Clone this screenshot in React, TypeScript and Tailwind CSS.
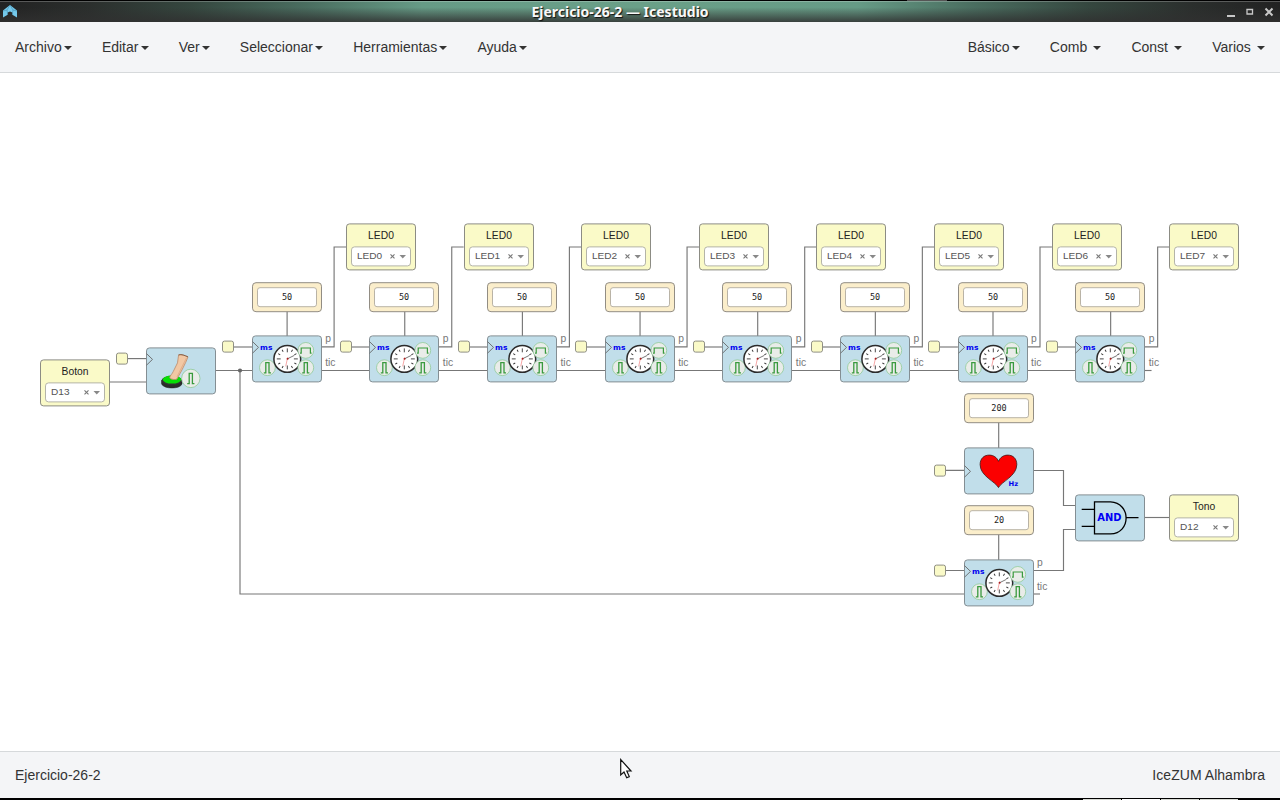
import React from "react";

const OFFSET_Y = 73;
const PITCH = 117.65;

type Point = { x: number; y: number };

function at(p: Point) {
  return { left: Math.round(p.x), top: p.y - OFFSET_Y };
}

function MenuItem({ label, spaced = false }: { label: string; spaced?: boolean }) {
  return (
    <button className="flex items-center whitespace-nowrap px-[15px]">
      <span>{label}</span>
      <span
        className={
          spaced
            ? "ml-[6.2px] mt-[2px] border-x-4 border-t-4 border-x-transparent border-t-[#333]"
            : "ml-[2.2px] mt-[2px] border-x-4 border-t-4 border-x-transparent border-t-[#333]"
        }
      />
    </button>
  );
}

function PinNode({ x, y, label, pin }: Point & { label: string; pin: string }) {
  return (
    <div
      className="absolute flex h-[47px] w-[70px] translate-y-[0.4px] flex-col items-center rounded-[3.5px] border border-[#8c8c84] bg-[#fafac8] pt-[5px]"
      style={at({ x, y })}
    >
      <div className="text-[10.3px] leading-[14px] text-[#222]">{label}</div>
      <div className="mt-[3px] flex h-[20px] w-[60px] shrink-0 items-center rounded-[3.5px] border border-[#b4b4a8] bg-white pl-[4.8px] pr-[4px]">
        <span className="flex-1 origin-left scale-x-[1.12] text-[9px] leading-none text-[#555]">{pin}</span>
        <svg width="17" height="8" viewBox="0 0 17 8" className="shrink-0">
          <path d="M1.5 2 L5.5 6 M5.5 2 L1.5 6" stroke="#777" strokeWidth="1.1" />
          <path d="M10.5 2.5 H17 L13.75 6 Z" fill="#888" />
        </svg>
      </div>
    </div>
  );
}

function ConstantNode({ x, y, value }: Point & { value: string }) {
  return (
    <div
      className="absolute flex h-[30px] w-[70px] translate-y-[0.2px] items-center justify-center rounded-[4px] border border-[#928d84] bg-[#fbeecb]"
      style={at({ x, y })}
    >
      <div className="flex h-[20px] w-[60px] items-center justify-center rounded-[3px] border border-[#b9b3a6] bg-white font-['DejaVu_Sans_Mono',monospace] text-[8.5px] leading-none text-[#222]">
        {value}
      </div>
    </div>
  );
}

function ClockStub({ x, y }: Point) {
  return (
    <div
      className="absolute h-[12px] w-[12px] translate-y-[0.6px] rounded-[2.5px] border border-[#8f8f84] bg-[#fafac8]"
      style={at({ x, y })}
    />
  );
}

function Block({
  x,
  y,
  clockY,
  children,
}: Point & { clockY?: number; children: React.ReactNode }) {
  return (
    <div
      className="absolute h-[47px] w-[70px] translate-y-[0.4px] rounded-[3.5px] border border-[#848e93] bg-[#c1deea]"
      style={at({ x, y })}
    >
      <svg width="68" height="45" viewBox="1 1 68 45" className="block overflow-visible">
        {clockY !== undefined && (
          <path
            d="M0.5 -5.8 L6.5 0 L0.5 5.8"
            transform={`translate(0 ${clockY})`}
            fill="none"
            stroke="#666"
            strokeWidth="0.9"
          />
        )}
        {children}
      </svg>
    </div>
  );
}

function Badge({ cx, cy, wide = false, r = 7.9 }: { cx: number; cy: number; wide?: boolean; r?: number }) {
  return (
    <g transform={`translate(${cx} ${cy})`}>
      <circle r={r} fill="#e9ece9" stroke="#8fca98" strokeWidth="0.8" />
      {wide ? (
        <path d="M-5.8 2.7 H-4.6 V-2.4 H4.6 V2.7 H5.8" fill="none" stroke="#399a3d" strokeWidth="1.2" />
      ) : (
        <path d="M-3.6 5.2 H-1.6 V-5 H1.6 V5.2 H3.6" fill="none" stroke="#399a3d" strokeWidth="1.3" />
      )}
    </g>
  );
}

const TICKS = [0, 30, 60, 90, 120, 150, 180, 210, 240, 270, 300, 330];

function TimerBlock({ x, y }: Point) {
  return (
    <Block x={x} y={y} clockY={12}>
      <text
        x="8"
        y="14.6"
        fontSize="7.2"
        fontWeight="700"
        fill="#0000f0"
        fontFamily="DejaVu Sans"
        textLength="12.4"
        lengthAdjust="spacingAndGlyphs"
      >
        ms
      </text>
      <Badge cx={15.4} cy={32.3} />
      <circle cx="35.3" cy="23.5" r="13.4" fill="#fff" stroke="#2b2b2b" strokeWidth="1.5" />
      {TICKS.map((a) => (
        <path
          key={a}
          d={a % 90 === 0 ? "M35.3 13 V16.9" : "M35.3 13 V15.3"}
          stroke="#333"
          strokeWidth="0.9"
          transform={`rotate(${a} 35.3 23.5)`}
        />
      ))}
      <path d="M35.3 23.5 L42.3 20" stroke="#555" strokeWidth="0.8" />
      <path d="M35.6 22.2 L33.7 31" stroke="#f08080" strokeWidth="0.7" />
      <circle cx="35.6" cy="23.4" r="1" fill="#a22" />
      <Badge cx={53.8} cy={15} wide />
      <Badge cx={53.8} cy={32.3} />
    </Block>
  );
}

function ButtonBlock({ x, y }: Point) {
  return (
    <Block x={x} y={y} clockY={12}>
      <path d="M15.5 33 V36.3 C17 42 35 42 36 36.3 V33 Z" fill="#292d2a" stroke="#222" strokeWidth="0.5" />
      <ellipse cx="25.8" cy="33" rx="10.2" ry="4.6" fill="#333" />
      <ellipse cx="26" cy="32.2" rx="9.2" ry="4" fill="#06df06" />
      <path
        d="M32.6 7.5 C35.6 6.6 38.6 8 42 9.5 L39.7 15 L36 22.5 L31 31.5 C29.5 32.8 25 32 23.7 30.5 C23.6 28.5 26.3 26.5 27.3 24 L31.5 15.5 Z"
        fill="#f2c8a4"
        stroke="#bb8a69"
        strokeWidth="0.8"
      />
      <path d="M40.5 10.5 L31 29.5" fill="none" stroke="#d8a17d" strokeWidth="0.7" />
      <path d="M32.6 7.5 C35.6 6.6 38.6 8 42 9.5" fill="none" stroke="#744f38" strokeWidth="0.8" />
      <Badge cx={44.8} cy={31} r={9.2} />
    </Block>
  );
}

function HeartBlock({ x, y }: Point) {
  return (
    <Block x={x} y={y} clockY={24}>
      <path
        d="M34.5 40.2 C31.5 34.2 16.1 28.7 16.1 17.2 C16.1 11 20.2 7.7 25.2 7.7 C29.6 7.7 32.8 10 34.5 13.9 C36.2 10 39.4 7.7 43.8 7.7 C48.8 7.7 52.8 11 52.8 17.2 C52.8 28.7 37.5 34.2 34.5 40.2 Z"
        fill="#fb0000"
        stroke="#3c1c1c"
        strokeWidth="0.8"
      />
      <text
        x="44.6"
        y="38.8"
        fontSize="6.5"
        fontWeight="700"
        fill="#0000f0"
        fontFamily="DejaVu Sans"
        textLength="9.6"
        lengthAdjust="spacingAndGlyphs"
      >
        Hz
      </text>
    </Block>
  );
}

function AndBlock({ x, y }: Point) {
  return (
    <Block x={x} y={y}>
      <g fill="none" stroke="#000" strokeWidth="1.3">
        <path d="M19.5 7.5 H35.5 C56.3 8.5 56.3 39 35.5 39.5 H19.5 Z" />
        <path d="M6.7 15 H19.5 M6.7 32 H19.5 M51 23.3 H63.5" />
      </g>
      <text
        x="22.3"
        y="26.8"
        fontSize="10.6"
        fontWeight="700"
        fill="#0000f5"
        fontFamily="DejaVu Sans"
        textLength="24.2"
        lengthAdjust="spacingAndGlyphs"
      >
        AND
      </text>
    </Block>
  );
}

function PortLabel({ x, y, text }: Point & { text: string }) {
  return (
    <span
      className="absolute text-[10.3px] leading-[12px] text-[#777]"
      style={{ left: x, top: y - OFFSET_Y }}
    >
      {text}
    </span>
  );
}

const stages = Array.from({ length: 8 }, (_, i) => ({ dx: i * PITCH, pin: `LED${i}` }));

function Wires() {
  return (
    <svg className="absolute left-0 top-0" width="1280" height="678" viewBox="0 73 1280 678">
      <g fill="none" stroke="#777" strokeWidth="1.15">
        {stages.map(({ dx, pin }, i) => (
          <g key={pin} transform={`translate(${dx} 0)`}>
            <path d="M234 347 H252" />
            <path d="M287.1 311 V336" />
            <path d="M321 346.8 H334.1 V247 H346" />
            <path d={i === 7 ? "M321 370.5 H328" : "M321 370.5 H370"} />
          </g>
        ))}
        <path d="M109 382 H146" />
        <path d="M128 358.6 H146" />
        <path d="M215 370.5 H252" />
        <path d="M240 370.5 V594 H964" />
        <path d="M945 470.4 H964 M945 570.5 H964" />
        <path d="M998.7 422 V448 M998.7 534 V560" />
        <path d="M1033 470.5 H1063.5 V505.5 H1075" />
        <path d="M1033 570.5 H1063.5 V529.5 H1075" />
        <path d="M1033 594 H1040" />
        <path d="M1144 517.5 H1169" />
      </g>
      <circle cx="240" cy="370.5" r="2.1" fill="#666" />
    </svg>
  );
}

function Diagram() {
  return (
    <main className="relative min-h-0 flex-1 overflow-hidden bg-white">
      <Wires />
      {stages.map(({ dx, pin }) => (
        <React.Fragment key={pin}>
          <PinNode x={345.85 + dx} y={223} label="LED0" pin={pin} />
          <ConstantNode x={251.7 + dx} y={282} value="50" />
          <ClockStub x={222.35 + dx} y={340} />
          <TimerBlock x={251.7 + dx} y={335} />
          <PortLabel x={325.2 + dx} y={332.5} text="p" />
          <PortLabel x={325.2 + dx} y={356.5} text="tic" />
        </React.Fragment>
      ))}
      <PinNode x={40} y={359} label="Boton" pin="D13" />
      <ClockStub x={116} y={352} />
      <ButtonBlock x={146} y={347} />
      <ConstantNode x={964} y={393} value="200" />
      <ClockStub x={934} y={464} />
      <HeartBlock x={964} y={447} />
      <ConstantNode x={964} y={505} value="20" />
      <ClockStub x={934} y={564} />
      <TimerBlock x={964} y={559} />
      <PortLabel x={1037} y={556.5} text="p" />
      <PortLabel x={1037} y={580.5} text="tic" />
      <AndBlock x={1075} y={494} />
      <PinNode x={1169} y={494} label="Tono" pin="D12" />
    </main>
  );
}

function TitleBar() {
  return (
    <header className="relative flex h-[22px] shrink-0 items-center border-t border-black bg-[linear-gradient(to_bottom,rgba(255,255,255,.35)_0px,rgba(255,255,255,0)_1.5px,transparent_30%,rgba(48,48,48,.25)_50%,rgba(48,48,48,.85)_100%),linear-gradient(to_right,#222_0%,#2b2f2d_7%,#35473f_15%,#4a6e60_24%,#669b86_33%,#6aa088_50%,#669b86_67%,#4a6e60_76%,#35473f_85%,#2b2f2d_93%,#222_100%)] px-[2px]">
      <div className="absolute -top-px left-[907px] h-px w-[40px] bg-[#555]" />
      <svg width="16" height="16" viewBox="0 0 16 16">
        <path d="M1 13.5 V6.5 L8 1 L15 6.5 V13.5 L10.3 10.8 V8.6 L8 7.6 L5.7 8.6 V10.8 Z" fill="#74c8ea" />
        <path
          d="M1 7 L5 6 L8 1 L11 6 L15 7 M5 6 L5.7 10.5 M11 6 L10.3 10.5"
          fill="none"
          stroke="#3c84a6"
          strokeWidth="0.5"
        />
      </svg>
      <h1 className="flex-1 whitespace-nowrap pr-[2px] text-center font-['Noto_Sans',sans-serif] text-[14px] font-bold leading-none text-[#f8f8f8] [text-shadow:1px_1px_1px_#111]">
        <span className="relative -left-px">Ejercicio-26-2 — Icestudio</span>
      </h1>
      <svg width="52" height="14" viewBox="0 0 52 14">
        <path d="M1 11 H9" stroke="#c8c8c8" strokeWidth="2" />
        <path d="M21 4.5 H26.5 V9 H21 Z M20.3 4.3 H27.2" fill="none" stroke="#c8c8c8" strokeWidth="1.3" />
        <path d="M39.5 3.5 L46.5 10.5 M46.5 3.5 L39.5 10.5" stroke="#c8c8c8" strokeWidth="2" />
      </svg>
    </header>
  );
}

export default function App() {
  return (
    <div className="relative flex h-[800px] w-[1280px] flex-col overflow-hidden bg-white font-['Liberation_Sans',Arial,sans-serif] text-[14px] text-[#333]">
      <TitleBar />
      <nav className="flex h-[51px] shrink-0 items-stretch justify-between border-b border-[#d6d9db] bg-[#f4f5f7]">
        <div className="flex">
          <MenuItem label="Archivo" />
          <MenuItem label="Editar" />
          <MenuItem label="Ver" />
          <MenuItem label="Seleccionar" />
          <MenuItem label="Herramientas" />
          <MenuItem label="Ayuda" />
        </div>
        <div className="flex">
          <MenuItem label="Básico" />
          <MenuItem label="Comb" spaced />
          <MenuItem label="Const" spaced />
          <MenuItem label="Varios" spaced />
        </div>
      </nav>
      <Diagram />
      <footer className="flex h-[47px] shrink-0 items-center justify-between border-t border-[#d6d9db] bg-[#f4f5f7] px-[15px]">
        <span>Ejercicio-26-2</span>
        <span className="tracking-[0.04px]">IceZUM Alhambra</span>
      </footer>
      <div className="flex h-[2px] shrink-0 items-end justify-end gap-[1px] bg-black pr-[42px]">
        <span className="h-[1px] w-[38px] bg-[#d8dad4]" />
        <span className="h-[1px] w-[38px] bg-white" />
        <span className="h-[1px] w-[38px] bg-[#d8dad4]" />
        <span className="h-[1px] w-[38px] bg-[#d8dad4]" />
      </div>
      <svg className="absolute left-[619px] top-[757px]" width="16" height="23" viewBox="0 0 16 23">
        <path
          d="M1.7 2.5 V18 L5 15 L7.7 20.8 L10.3 19.6 L7.8 14 H12 Z"
          fill="#fff"
          stroke="#111"
          strokeWidth="1.2"
        />
      </svg>
    </div>
  );
}
